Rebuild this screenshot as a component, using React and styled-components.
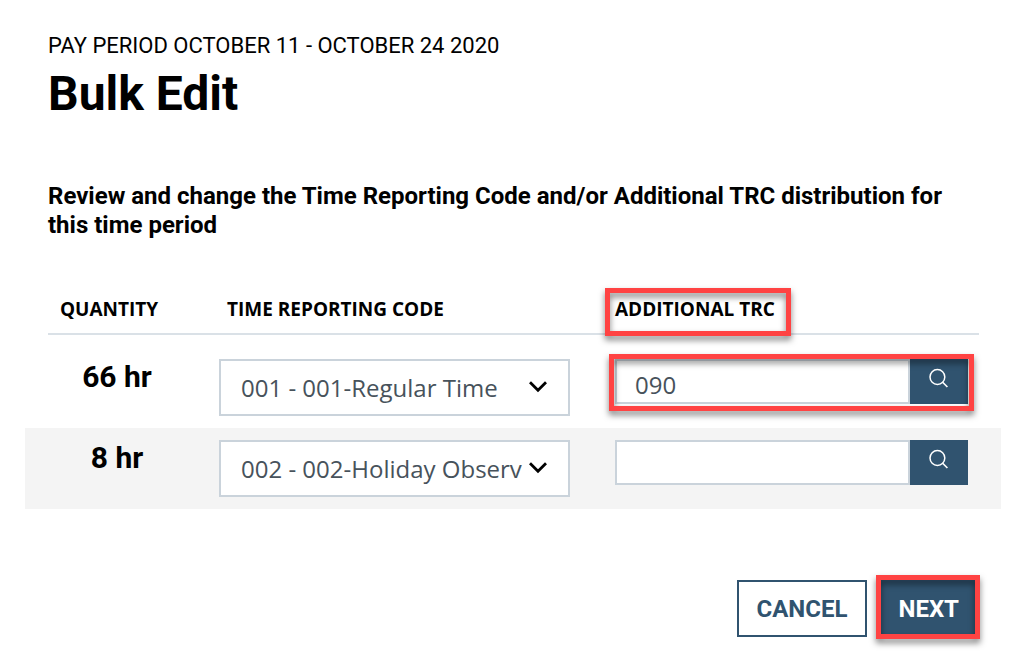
import React, { useState } from "react"
import styled, { createGlobalStyle } from "styled-components"

const GlobalStyle = createGlobalStyle`
  * {
    box-sizing: border-box;
  }

  body {
    margin: 0;
    background-color: #fff;
    color: #000;
    font-family: Roboto, sans-serif;
  }
`

const Page = styled.main`
  padding: 32px 35px 32px 48px;
`

const Period = styled.p`
  margin: 0;
  font-size: 22px;
  line-height: 28px;
`

const Title = styled.h1`
  margin: 4px 0 0;
  font-size: 48px;
  font-weight: 700;
  line-height: 60px;
`

const Intro = styled.h2`
  margin: 58px 0 0;
  font-size: 24px;
  font-weight: 700;
  line-height: 29px;
`

const Table = styled.table`
  width: calc(100% + 45px);
  margin: 44px -22px 0 -23px;
  border-collapse: collapse;
  table-layout: fixed;
`

const HeadCell = styled.th`
  padding: 0 0 12px;
  font-family: "Open Sans", sans-serif;
  font-size: 19px;
  font-weight: 700;
  line-height: 28px;
  text-align: left;

  &:first-child {
    width: 184px;
    padding-left: 23px;
  }

  &:last-child {
    padding-right: 22px;
  }
`

const HeadLabel = styled.div`
  height: 51px;
  padding: 11px 0 0 ${props => props.$indent}px;
  border-bottom: 2px solid #dae1e7;
`

const Row = styled.tr`
  background-color: ${props => (props.$shaded ? "#f4f4f4" : "#fff")};
`

const Quantity = styled.th`
  padding: 12px 0;
  font-size: 30px;
  font-weight: 700;
  line-height: 36px;
  text-align: center;
  vertical-align: top;
`

const Cell = styled.td`
  padding: 12px 35px 12px 10px;
  vertical-align: top;

  &:last-child {
    padding-right: 33px;
  }
`

const SelectBox = styled.div`
  position: relative;

  svg {
    position: absolute;
    top: 20px;
    right: 22px;
    pointer-events: none;
  }
`

const Select = styled.select`
  display: block;
  width: 100%;
  height: 57px;
  padding: 0 44px 0 20px;
  appearance: none;
  border: 2px solid #cad3db;
  border-radius: 0;
  background-color: #fff;
  color: #47525b;
  font-family: "Open Sans", sans-serif;
  font-size: 24px;
`

const Lookup = styled.div`
  display: flex;
  position: relative;
  height: 45px;
`

const CodeInput = styled.input`
  flex: 1;
  min-width: 0;
  padding: 6px 18px 0;
  border: 2px solid #cad3db;
  border-radius: 0;
  background-color: #fff;
  color: #47525b;
  font-family: "Open Sans", sans-serif;
  font-size: 24px;
`

const SearchButton = styled.button`
  display: flex;
  justify-content: center;
  align-items: flex-start;
  width: 58px;
  padding: 9px 0 0;
  border: none;
  background-color: #30536f;
  color: #fff;
  cursor: pointer;
`

const Actions = styled.div`
  display: flex;
  justify-content: flex-end;
  gap: 11px;
  margin-top: 71px;
`

const Button = styled.button`
  height: 57px;
  padding: 0 18px;
  border: 2px solid #30536f;
  background-color: ${props => (props.$primary ? "#30536f" : "#fff")};
  color: ${props => (props.$primary ? "#fff" : "#30536f")};
  font-family: Roboto, sans-serif;
  font-size: 24px;
  font-weight: 700;
  cursor: pointer;
`

const Marked = styled.span`
  display: inline-block;
  position: relative;
`

const Marker = styled.span`
  position: absolute;
  inset: ${props => props.$inset};
  border: 5px solid #ff4343;
  filter: drop-shadow(0 4px 3px rgba(0, 0, 0, 0.5));
  pointer-events: none;
`

const ChevronIcon = () => (
  <svg width="20" height="16" viewBox="0 0 20 16" fill="none" aria-hidden="true">
    <path d="M2 3.2L10 11.2L18 3.2" stroke="#000" strokeWidth="2.8" />
  </svg>
)

const SearchIcon = () => (
  <svg width="20" height="20" viewBox="0 0 20 20" fill="none" aria-hidden="true">
    <circle cx="8.4" cy="9" r="7.4" stroke="currentColor" strokeWidth="1.5" />
    <path d="M13.4 14L18.4 19" stroke="currentColor" strokeWidth="1.7" />
  </svg>
)

const codes = ["001 - 001-Regular Time", "002 - 002-Holiday Observ"]

const entries = [
  { quantity: "66 hr", code: codes[0], trc: "090", marked: true },
  { quantity: "8 hr", code: codes[1], trc: "", marked: false },
]

const EntryRow = ({ entry, shaded }) => {
  const [code, setCode] = useState(entry.code)
  const [trc, setTrc] = useState(entry.trc)

  return (
    <Row $shaded={shaded}>
      <Quantity scope="row">{entry.quantity}</Quantity>
      <Cell>
        <SelectBox>
          <Select
            aria-labelledby="code-heading"
            value={code}
            onChange={e => setCode(e.target.value)}
          >
            {codes.map(item => (
              <option key={item}>{item}</option>
            ))}
          </Select>
          <ChevronIcon />
        </SelectBox>
      </Cell>
      <Cell>
        <Lookup>
          <CodeInput
            type="text"
            aria-labelledby="trc-heading"
            value={trc}
            onChange={e => setTrc(e.target.value)}
          />
          <SearchButton type="button" aria-label="Search">
            <SearchIcon />
          </SearchButton>
          {entry.marked && <Marker $inset="-5px -6px -7px" />}
        </Lookup>
      </Cell>
    </Row>
  )
}

const App = () => (
  <>
    <GlobalStyle />
    <Page>
      <Period>PAY PERIOD OCTOBER 11 - OCTOBER 24 2020</Period>
      <Title>Bulk Edit</Title>
      <Intro>
        Review and change the Time Reporting Code and/or Additional TRC
        distribution for this time period
      </Intro>
      <Table>
        <thead>
          <tr>
            <HeadCell scope="col">
              <HeadLabel $indent={12}>QUANTITY</HeadLabel>
            </HeadCell>
            <HeadCell scope="col" id="code-heading">
              <HeadLabel $indent={18}>TIME REPORTING CODE</HeadLabel>
            </HeadCell>
            <HeadCell scope="col" id="trc-heading">
              <HeadLabel $indent={10}>
                <Marked>
                  ADDITIONAL TRC
                  <Marker $inset="-7px -16px -13px -10px" />
                </Marked>
              </HeadLabel>
            </HeadCell>
          </tr>
        </thead>
        <tbody>
          {entries.map((entry, i) => (
            <EntryRow key={entry.quantity} entry={entry} shaded={i % 2 === 1} />
          ))}
        </tbody>
      </Table>
      <Actions>
        <Button type="button">CANCEL</Button>
        <Marked>
          <Button type="button" $primary>
            NEXT
          </Button>
          <Marker $inset="-5px -1px -2px -2px" />
        </Marked>
      </Actions>
    </Page>
  </>
)

export default App
